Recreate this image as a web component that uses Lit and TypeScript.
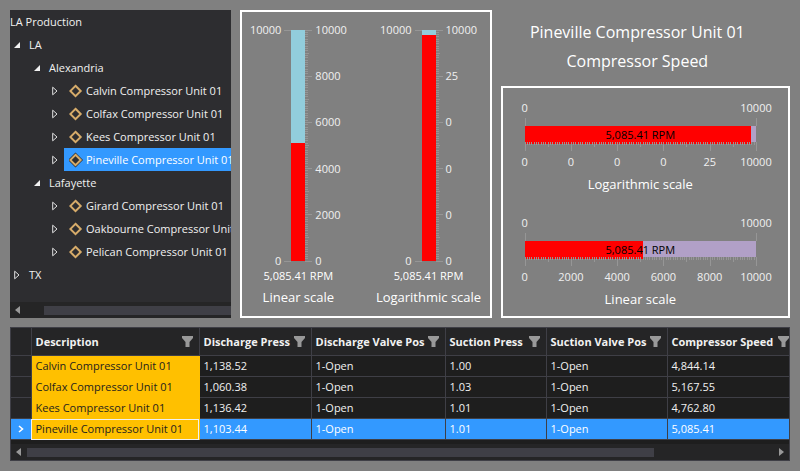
import { LitElement, html, svg, css } from "lit";
import { customElement, property, state } from "lit/decorators.js";
import { classMap } from "lit/directives/class-map.js";
import { styleMap } from "lit/directives/style-map.js";

interface TreeNode {
  label: string;
  level: number;
  kind: "open" | "closed";
  unit?: boolean;
}

const NODES: TreeNode[] = [
  { label: "LA", level: 0, kind: "open" },
  { label: "Alexandria", level: 1, kind: "open" },
  { label: "Calvin Compressor Unit 01", level: 2, kind: "closed", unit: true },
  { label: "Colfax Compressor Unit 01", level: 2, kind: "closed", unit: true },
  { label: "Kees Compressor Unit 01", level: 2, kind: "closed", unit: true },
  { label: "Pineville Compressor Unit 01", level: 2, kind: "closed", unit: true },
  { label: "Lafayette", level: 1, kind: "open" },
  { label: "Girard Compressor Unit 01", level: 2, kind: "closed", unit: true },
  { label: "Oakbourne Compressor Unit 01", level: 2, kind: "closed", unit: true },
  { label: "Pelican Compressor Unit 01", level: 2, kind: "closed", unit: true },
  { label: "TX", level: 0, kind: "closed" },
];

const COLUMNS = [
  "Description",
  "Discharge Press",
  "Discharge Valve Pos",
  "Suction Press",
  "Suction Valve Pos",
  "Compressor Speed",
];

const ROWS = [
  ["Calvin Compressor Unit 01", "1,138.52", "1-Open", "1.00", "1-Open", "4,844.14"],
  ["Colfax Compressor Unit 01", "1,060.38", "1-Open", "1.03", "1-Open", "5,167.55"],
  ["Kees Compressor Unit 01", "1,136.42", "1-Open", "1.01", "1-Open", "4,762.80"],
  ["Pineville Compressor Unit 01", "1,103.44", "1-Open", "1.01", "1-Open", "5,085.41"],
];

const VALUE = "5,085.41 RPM";
const LINEAR = ["0", "2000", "4000", "6000", "8000", "10000"];
const LOG = ["0", "0", "0", "0", "25", "10000"];

@customElement("h-scroll")
class HScroll extends LitElement {
  @property({ type: Boolean, reflect: true }) clipped = false;

  static styles = css`
    :host {
      display: flex;
      align-items: center;
      height: 16px;
      background: #252526;
      overflow: hidden;
    }
    .arrow {
      flex: none;
      width: 16px;
      height: 16px;
      padding: 0;
      border: 0;
      background: none;
      display: grid;
      place-items: center;
    }
    .arrow svg {
      fill: #999;
      display: block;
    }
    .track {
      flex: 1;
      display: flex;
    }
    .thumb {
      width: 84%;
      height: 9px;
      background: #3f3f46;
    }
    :host([clipped]) .track {
      padding-left: 18px;
    }
    :host([clipped]) .thumb {
      width: 100%;
    }
  `;

  render() {
    return html`
      <button class="arrow" aria-label="Scroll left">
        <svg width="6" height="8"><path d="M5 0v8L0 4z" /></svg>
      </button>
      <div class="track"><div class="thumb"></div></div>
      ${this.clipped
        ? ""
        : html`<button class="arrow" aria-label="Scroll right">
            <svg width="6" height="8"><path d="M1 0v8l5-4z" /></svg>
          </button>`}
    `;
  }
}

@customElement("bar-gauge")
class BarGauge extends LitElement {
  @property({ type: Boolean, reflect: true }) vertical = false;
  @property({ type: Number }) percent = 0;
  @property() caption = "";
  @property({ attribute: false }) labels: string[] = [];

  static styles = css`
    :host {
      display: block;
      color: #f0f0f0;
      font-size: 11px;
      line-height: 16px;
      white-space: nowrap;
    }
    .caption {
      font-size: 13px;
      line-height: 18px;
      text-align: center;
      color: #fff;
    }
    .ticks {
      display: block;
      width: 100%;
      height: 100%;
      overflow: visible;
      stroke: #969696;
      stroke-width: 1;
      shape-rendering: crispEdges;
    }

    .h-labels {
      display: flex;
      justify-content: space-between;
    }
    .h-labels span {
      width: 0;
      display: flex;
      justify-content: center;
    }
    .h-ticks {
      height: 9px;
    }
    .h-labels + .h-ticks {
      margin-top: 1px;
    }
    .h-ticks + .h-labels {
      margin-top: 3px;
    }
    .h-bar {
      display: grid;
      height: 16px;
      background: #b1a0c7;
    }
    .h-bar > * {
      grid-area: 1 / 1;
    }
    .h-fill {
      background: #f00;
    }
    .h-value {
      color: #000;
      text-align: center;
      line-height: 18px;
    }
    .h-caption {
      margin-top: 5px;
    }

    .v-scale {
      display: grid;
      grid-template-columns: 1fr 7px 14px 7px 1fr;
      height: 231px;
    }
    .v-labels {
      display: flex;
      flex-direction: column;
      justify-content: space-between;
      padding: 0 3px;
    }
    .v-labels span {
      height: 0;
      display: flex;
      align-items: center;
    }
    .v-labels.left {
      align-items: flex-end;
    }
    .v-bar {
      display: flex;
      flex-direction: column;
      justify-content: flex-end;
      background: #92cddc;
    }
    .v-fill {
      background: #f00;
    }
    .v-value {
      margin-top: 7px;
      text-align: center;
      color: #fff;
    }
    .v-caption {
      margin-top: 4px;
    }
  `;

  private hTicks() {
    return Array.from({ length: 101 }, (_, i) => {
      const len = i % 20 === 0 ? 9 : i % 10 === 0 ? 5 : 3;
      return svg`<line x1="${i}%" x2="${i}%" y1="0" y2="${len}"></line>`;
    });
  }

  private vTicks() {
    return Array.from({ length: 101 }, (_, i) => {
      const len = i % 20 === 0 ? 7 : i % 10 === 0 ? 4 : 3;
      return svg`<line y1="${i}%" y2="${i}%" x1="0" x2="${len}"></line>`;
    });
  }

  private ends() {
    return this.vertical
      ? svg`<line x1="0" x2="7" y1="0" y2="0"></line><line x1="0" x2="7" y1="100%" y2="100%"></line>`
      : svg`<line x1="0" x2="0" y1="1" y2="9"></line><line x1="100%" x2="100%" y1="1" y2="9"></line>`;
  }

  render() {
    if (this.vertical) {
      return html`
        <div class="v-scale">
          <div class="v-labels left"><span>10000</span><span>0</span></div>
          <svg class="ticks">${this.ends()}</svg>
          <div class="v-bar">
            <div class="v-fill" style=${styleMap({ height: `${this.percent}%` })}></div>
          </div>
          <svg class="ticks">${this.vTicks()}</svg>
          <div class="v-labels">
            ${[...this.labels].reverse().map((l) => html`<span>${l}</span>`)}
          </div>
        </div>
        <div class="v-value">${VALUE}</div>
        <div class="caption v-caption">${this.caption}</div>
      `;
    }
    return html`
      <div class="h-labels"><span>0</span><span>10000</span></div>
      <div class="h-ticks"><svg class="ticks">${this.ends()}</svg></div>
      <div class="h-bar">
        <div class="h-fill" style=${styleMap({ width: `${this.percent}%` })}></div>
        <div class="h-value">${VALUE}</div>
      </div>
      <div class="h-ticks"><svg class="ticks">${this.hTicks()}</svg></div>
      <div class="h-labels">${this.labels.map((l) => html`<span>${l}</span>`)}</div>
      <div class="caption h-caption">${this.caption}</div>
    `;
  }
}

@customElement("app-root")
class AppRoot extends LitElement {
  @state() private selected = "Pineville Compressor Unit 01";

  static styles = css`
    :host {
      display: grid;
      grid-template-columns: 221fr 251fr 289fr;
      column-gap: 9px;
      row-gap: 9px;
      padding: 10px;
      min-height: 100vh;
      box-sizing: border-box;
      align-content: start;
      background: #808080;
      color: #f1f1f1;
      font-family: "Open Sans", "Noto Sans", sans-serif;
      font-size: 11px;
      line-height: 16px;
    }
    button {
      font: inherit;
      color: inherit;
      background: none;
      border: 0;
      padding: 0;
    }

    .tree {
      min-width: 0;
      display: flex;
      flex-direction: column;
      background: #2d2d30;
      overflow: hidden;
      white-space: nowrap;
    }
    .tree-title {
      margin: 0;
      font-size: 11px;
      font-weight: 400;
      line-height: 23px;
    }
    .nodes {
      list-style: none;
      margin: 0;
      padding: 0;
      flex: 1;
    }
    .node {
      display: flex;
      height: 23px;
    }
    .level-1 {
      padding-left: 20px;
    }
    .level-2 {
      padding-left: 38px;
    }
    .expander {
      flex: none;
      width: 14px;
      display: grid;
      place-items: center;
    }
    .node-label {
      flex: 1;
      display: flex;
      align-items: center;
      gap: 3px;
      padding-left: 5px;
      text-align: left;
    }
    .unit .node-label {
      margin-left: 2px;
    }
    .node-label.selected {
      background: #39f;
      color: #fff;
    }

    .panel {
      border: 2px solid #fff;
      box-sizing: border-box;
      min-width: 0;
    }
    .vertical-panel {
      display: grid;
      grid-template-columns: 1fr 1fr;
      column-gap: 18px;
      padding: 18px 5px 9px 0;
    }
    .speed {
      min-width: 0;
      display: flex;
      flex-direction: column;
    }
    .speed-title {
      margin: 0;
      padding: 8px 16px 10px 0;
      text-align: center;
      font-size: 16px;
      font-weight: 400;
      line-height: 29px;
      color: #fff;
    }
    .horizontal-panel {
      flex: 1;
      display: flex;
      flex-direction: column;
      gap: 22px;
      padding: 12px 32px 8px 22px;
    }

    .grid {
      grid-column: 1 / -1;
      min-width: 0;
      overflow: hidden;
      border: 1px solid #3f3f46;
      background: #1e1e1e;
    }
    table {
      width: 100%;
      table-layout: fixed;
      border-collapse: collapse;
      white-space: nowrap;
    }
    .c-head { width: 20px; }
    .c-0 { width: 168px; }
    .c-1 { width: 112px; }
    .c-2 { width: 134px; }
    .c-3 { width: 101px; }
    .c-4 { width: 121px; }
    th,
    td {
      height: 20px;
      padding: 0 0 0 4px;
      border-right: 1px solid #3f3f46;
      border-bottom: 1px solid #3f3f46;
      text-align: left;
      font-weight: 400;
    }
    thead th {
      height: 27px;
      background: #252526;
      font-weight: 700;
    }
    th:last-child,
    td:last-child {
      border-right: 0;
    }
    .head {
      display: flex;
      align-items: center;
      justify-content: space-between;
      padding-right: 6px;
    }
    th:last-child .head {
      padding-right: 0;
    }
    .filter,
    .filter svg {
      display: block;
    }
    .row-head {
      background: #252526;
      padding: 0;
    }
    .row-head svg {
      display: block;
      margin: 0 auto;
    }
    .desc {
      background: #ffc000;
      color: #1e1e1e;
      border-color: #ffc000;
    }
    .current td,
    .current th {
      background: #39f;
      color: #fff;
    }
    .current .desc {
      background: #ffc000;
      color: #1e1e1e;
      outline: 1px solid #f1f1f1;
      outline-offset: -1px;
    }
    .grid h-scroll {
      margin-top: 4px;
    }
  `;

  private expander(node: TreeNode) {
    return node.kind === "open"
      ? html`<svg width="6" height="6"><path d="M6 0v6H0z" fill="#f1f1f1" /></svg>`
      : html`<svg width="6" height="10">
          <path d="M.7 1.2v7.6L5 5z" fill="none" stroke="#e0e0e0" />
        </svg>`;
  }

  render() {
    return html`
      <nav class="tree" aria-label="Units">
        <h2 class="tree-title">LA Production</h2>
        <ul class="nodes">
          ${NODES.map(
            (n) => html`<li class=${classMap({ node: true, [`level-${n.level}`]: true, unit: !!n.unit })}>
              <button class="expander" aria-label=${`Toggle ${n.label}`}>${this.expander(n)}</button>
              <button
                class=${classMap({ "node-label": true, selected: n.label === this.selected })}
                @click=${() => (this.selected = n.label)}
              >
                ${n.unit
                  ? html`<svg width="14" height="16">
                      ${n.label === this.selected
                        ? svg`<path d="M6.5 .5L14 8 6.5 15.5-1 8z" fill="#2d2d30"></path>`
                        : ""}
                      <path d="M6.5 2.8L11.7 8 6.5 13.2 1.3 8z" fill="none" stroke="#d7ac6a" stroke-width="2" />
                    </svg>`
                  : ""}<span>${n.label}</span>
              </button>
            </li>`
          )}
        </ul>
        <h-scroll clipped></h-scroll>
      </nav>

      <section class="panel vertical-panel">
        <bar-gauge vertical .percent=${51} .labels=${LINEAR} caption="Linear scale"></bar-gauge>
        <bar-gauge vertical .percent=${98} .labels=${LOG} caption="Logarithmic scale"></bar-gauge>
      </section>

      <section class="speed">
        <h1 class="speed-title">Pineville Compressor Unit 01<br />Compressor Speed</h1>
        <div class="panel horizontal-panel">
          <bar-gauge .percent=${98} .labels=${LOG} caption="Logarithmic scale"></bar-gauge>
          <bar-gauge .percent=${51} .labels=${LINEAR} caption="Linear scale"></bar-gauge>
        </div>
      </section>

      <section class="grid">
        <table>
          <colgroup>
            <col class="c-head" />
            ${COLUMNS.map((_, i) => html`<col class="c-${i}" />`)}
          </colgroup>
          <thead>
            <tr>
              <th class="row-head"></th>
              ${COLUMNS.map(
                (c) => html`<th scope="col">
                  <div class="head">
                    <span>${c}</span>
                    <button class="filter" aria-label=${`Filter ${c}`}>
                      <svg width="11" height="11"><path d="M0 0h11v2L7.5 6v5h-4V6L0 2z" fill="#999" /></svg>
                    </button>
                  </div>
                </th>`
              )}
            </tr>
          </thead>
          <tbody>
            ${ROWS.map((row) => {
              const current = row[0] === this.selected;
              return html`<tr class=${classMap({ current })}>
                <td class="row-head">
                  ${current
                    ? html`<svg width="6" height="8">
                        <path d="M1 1l3.5 3L1 7" fill="none" stroke="#fff" stroke-width="1.6" />
                      </svg>`
                    : ""}
                </td>
                ${row.map((v, i) => html`<td class=${i === 0 ? "desc" : "value"}>${v}</td>`)}
              </tr>`;
            })}
          </tbody>
        </table>
        <h-scroll></h-scroll>
      </section>
    `;
  }
}
